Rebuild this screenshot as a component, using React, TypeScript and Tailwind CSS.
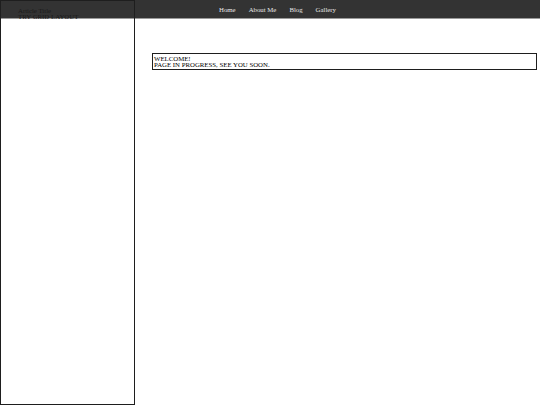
export default function App() {
  const links = ["Home", "About Me", "Blog", "Gallery"];

  return (
    <div
      className="relative h-[405px] w-[540px] overflow-hidden bg-white text-black"
      style={{ fontFamily: '"Liberation Serif", "Times New Roman", serif' }}
    >
      {/* top bar sits behind the sidebar */}
      <header className="absolute inset-x-0 top-0 flex h-[19px] items-center border-b border-[#9a9a9a] bg-[#333] pl-[219px] pt-[3px]">
        <nav className="flex gap-[13px] text-[6.8px] leading-none text-[#e8e8e8]">
          {links.map((l) => (
            <a key={l} href="#">
              {l}
            </a>
          ))}
        </nav>
      </header>

      <div className="relative grid h-full grid-cols-[135px_1fr]">
        <aside className="border border-[#1e1e1e] pl-[17px] pt-[7px] text-[6.8px] leading-[6px] text-[#1a1a1a]">
          <p className="h-[6px]">Article Title</p>
          <p className="h-[6px]">TRY GRID LAYOUT</p>
        </aside>

        <main className="pl-[17px] pr-[3px] pt-[53px]">
          <div className="border border-[#1e1e1e] px-px pb-px pt-[2px] text-[6.8px] leading-[6px]">
            <p>WELCOME!</p>
            <p>PAGE IN PROGRESS, SEE YOU SOON.</p>
          </div>
        </main>
      </div>
    </div>
  );
}
